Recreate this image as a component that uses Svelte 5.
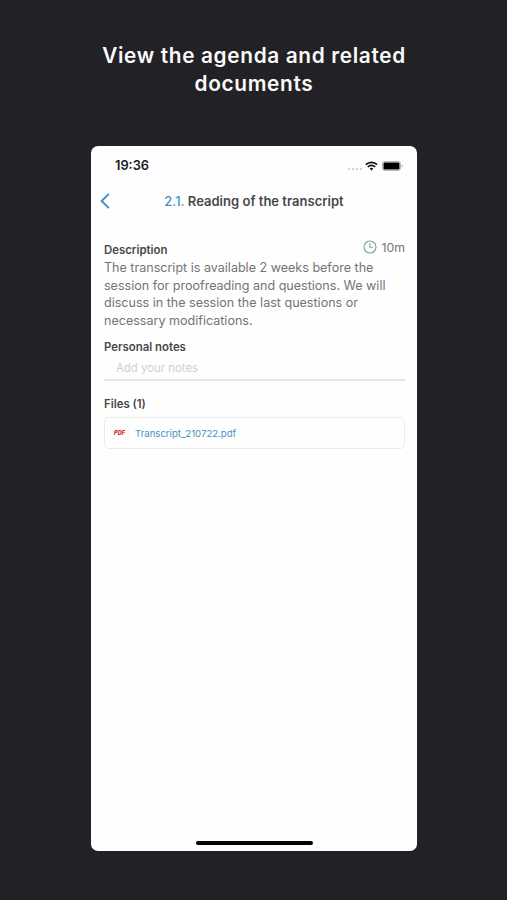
<script lang="ts">
  const headline = ["View the agenda and related", "documents"];

  const item = {
    number: "2.1.",
    title: "Reading of the transcript",
    duration: "10m",
    description: [
      "The transcript is available 2 weeks before the",
      "session for proofreading and questions. We will",
      "discuss in the session the last questions or",
      "necessary modifications.",
    ],
    files: ["Transcript_210722.pdf"],
  };

  let notes = $state("");
</script>

<main>
  <h1>
    {#each headline as line}
      <span>{line}</span>
    {/each}
  </h1>

  <div class="phone">
    <div class="status">
      <span class="time">19:36</span>
      <div class="indicators">
        <div class="signal"><i></i><i></i><i></i><i></i></div>
        <svg class="wifi" viewBox="0 0 13 10" width="13" height="10">
          <path d="M.9 3.7a8 8 0 0 1 11.2 0M2.8 5.8a5.3 5.3 0 0 1 7.4 0" fill="none" stroke="#111" stroke-width="1.7" />
          <path d="M6.5 9.6 4.6 7.6a2.8 2.8 0 0 1 3.8 0z" fill="#111" />
        </svg>
        <svg class="battery" viewBox="0 0 21 10" width="21" height="10">
          <rect x=".5" y=".5" width="18" height="9" rx="2.4" fill="#fff" stroke="#b5b5b5" />
          <rect x="1.5" y="1.5" width="16" height="7" rx="1.2" fill="#000" />
          <path d="M19.6 3.6q1.2.4 1.2 1.4t-1.2 1.4z" fill="#aaa" />
        </svg>
      </div>
    </div>

    <header>
      <button type="button" aria-label="Back">
        <svg viewBox="0 0 10 16" width="10" height="16">
          <path d="M8.4 1.4 1.6 8l6.8 6.6" fill="none" stroke="#3d8bbd" stroke-width="1.8" stroke-linecap="round" stroke-linejoin="round" />
        </svg>
      </button>
      <h2><span class="number">{item.number}</span> {item.title}</h2>
    </header>

    <div class="content">
      <div class="top">
        <h3 class="description-title">Description</h3>
        <div class="duration">
          <svg viewBox="0 0 14 14" width="14" height="14">
            <circle cx="7" cy="7" r="6" fill="none" stroke="#77a78f" stroke-width="1.1" />
            <path d="M6.8 3.2v4h3.1" fill="none" stroke="#77a78f" stroke-width="1.1" />
          </svg>
          <span>{item.duration}</span>
        </div>
      </div>
      <p>
        {#each item.description as line}
          <span>{line}</span>
        {/each}
      </p>

      <h3 class="notes-title">Personal notes</h3>
      <input type="text" placeholder="Add your notes" bind:value={notes} />

      <h3 class="files-title">Files ({item.files.length})</h3>
      {#each item.files as file}
        <div class="file">
          <span class="badge">PDF</span>
          <span class="file-name">{file}</span>
        </div>
      {/each}
    </div>

    <div class="home"></div>
  </div>
</main>

<style>
  :global(body) {
    background: #222125;
  }

  main {
    box-sizing: border-box;
    height: 900px;
    padding: 42px 90px 49px 91px;
    background: #222125;
    font-family: Inter, "Liberation Sans", sans-serif;
    color: #48484a;
    display: flex;
    flex-direction: column;
  }

  h1,
  h2,
  h3,
  p {
    margin: 0;
    white-space: nowrap;
  }

  h1 {
    height: 104px;
    font-size: 20.8px;
    line-height: 28px;
    font-weight: 600;
    letter-spacing: 0.66px;
    text-align: center;
    color: #fafafa;
  }

  h1 span,
  p span {
    display: block;
  }

  .phone {
    flex: 1;
    box-sizing: border-box;
    background: #fefefe;
    border-radius: 7px;
    display: flex;
    flex-direction: column;
  }

  .status {
    height: 39px;
    padding: 0 14px 0 24px;
    display: flex;
    align-items: center;
    justify-content: space-between;
  }

  .time {
    padding-bottom: 1px;
    font-size: 12.8px;
    font-weight: 600;
    color: #1c1c1e;
  }

  .indicators {
    display: flex;
    align-items: center;
  }

  .signal {
    display: flex;
    gap: 2px;
    margin: 6px 3px 0 0;
  }

  .signal i {
    width: 2px;
    height: 2px;
    border-radius: 1px;
    background: #c4c4c4;
  }

  .battery {
    margin-left: 4px;
  }

  header {
    height: 32px;
    padding: 0 10px 0 9px;
    display: grid;
    grid-template-columns: 10px 1fr 9px;
    align-items: center;
  }

  button {
    padding: 0;
    border: none;
    background: none;
    line-height: 0;
  }

  h2 {
    text-align: center;
    font-size: 13px;
    font-weight: 600;
    letter-spacing: 0.02px;
  }

  .number {
    color: #4592c2;
    font-weight: 500;
  }

  .content {
    padding: 23px 12px 0 13px;
    display: flex;
    flex-direction: column;
  }

  .top {
    display: flex;
    justify-content: space-between;
    height: 19px;
  }

  h3 {
    font-size: 11.4px;
    line-height: 16px;
    font-weight: 600;
  }

  .description-title {
    padding-top: 2px;
  }

  .duration {
    display: flex;
    align-items: center;
    gap: 4px;
    height: 14px;
    font-size: 12.3px;
    color: #777;
  }

  p {
    padding-top: 0.4px;
    font-size: 12.55px;
    line-height: 17.4px;
    color: #747474;
  }

  .notes-title {
    margin-top: 10px;
  }

  input {
    height: 26px;
    box-sizing: border-box;
    padding: 2px 12px 0;
    border: none;
    border-bottom: 2px solid #e6e6e6;
    border-radius: 0;
    outline: none;
    background: none;
    font: 11.4px Inter, "Liberation Sans", sans-serif;
    color: #48484a;
  }

  input::placeholder {
    color: #cfcfcf;
    opacity: 1;
  }

  .files-title {
    margin-top: 15px;
  }

  .file {
    height: 32px;
    box-sizing: border-box;
    margin-top: 5px;
    padding: 1px 5px 0;
    border: 1px solid #ececec;
    border-radius: 5px;
    display: flex;
    align-items: center;
    gap: 6px;
  }

  .badge {
    width: 19px;
    height: 19px;
    border: 1px solid #f8f8f8;
    box-sizing: border-box;
    border-radius: 2px;
    text-align: center;
    font-size: 5.5px;
    line-height: 17px;
    font-weight: 900;
    font-style: italic;
    color: #d6343c;
  }

  .file-name {
    font-size: 9.6px;
    color: #4592c2;
  }

  .home {
    width: 117px;
    height: 4px;
    margin: auto auto 6px;
    border-radius: 2px;
    background: #000;
  }
</style>
